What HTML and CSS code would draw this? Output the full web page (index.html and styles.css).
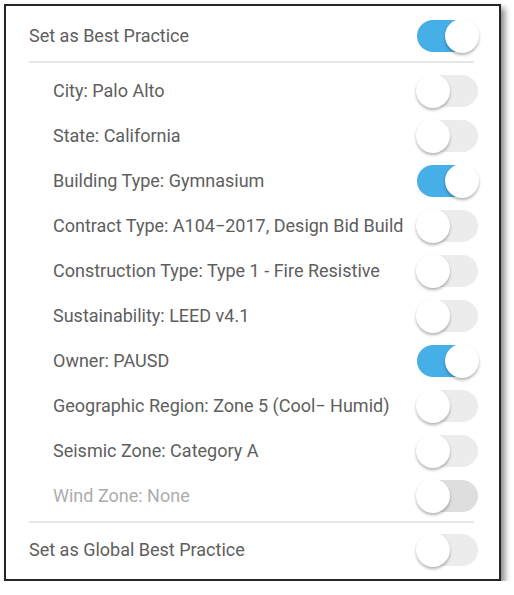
FILE: index.html
```html
<!DOCTYPE html>
<html>
<head>
	<title>Best Practice</title>
	<link rel="stylesheet" href="styles.css">
</head>
<body>
	<div class="panel">
		<div class="row">
			<span class="label">Set as Best Practice</span>
			<span class="toggle on"><span class="knob"></span></span>
		</div>
		<div class="divider top"></div>
		<div class="row sub">
			<span class="label">City: Palo Alto</span>
			<span class="toggle"><span class="knob"></span></span>
		</div>
		<div class="row sub">
			<span class="label">State: California</span>
			<span class="toggle"><span class="knob"></span></span>
		</div>
		<div class="row sub">
			<span class="label">Building Type: Gymnasium</span>
			<span class="toggle on"><span class="knob"></span></span>
		</div>
		<div class="row sub">
			<span class="label">Contract Type: A104&minus;2017, Design Bid Build</span>
			<span class="toggle"><span class="knob"></span></span>
		</div>
		<div class="row sub">
			<span class="label">Construction Type: Type 1 - Fire Resistive</span>
			<span class="toggle"><span class="knob"></span></span>
		</div>
		<div class="row sub">
			<span class="label">Sustainability: LEED v4.1</span>
			<span class="toggle"><span class="knob"></span></span>
		</div>
		<div class="row sub">
			<span class="label">Owner: PAUSD</span>
			<span class="toggle on"><span class="knob"></span></span>
		</div>
		<div class="row sub">
			<span class="label">Geographic Region: Zone 5 (Cool&minus; Humid)</span>
			<span class="toggle"><span class="knob"></span></span>
		</div>
		<div class="row sub">
			<span class="label">Seismic Zone: Category A</span>
			<span class="toggle"><span class="knob"></span></span>
		</div>
		<div class="row sub disabled">
			<span class="label">Wind Zone: None</span>
			<span class="toggle"><span class="knob"></span></span>
		</div>
		<div class="divider bottom"></div>
		<div class="row">
			<span class="label">Set as Global Best Practice</span>
			<span class="toggle"><span class="knob"></span></span>
		</div>
	</div>
</body>
</html>
```

FILE: styles.css
```css
body {
	margin: 0;
	background: #fff;
	font-family: Roboto, "Liberation Sans", sans-serif;
}
.panel {
	box-sizing: border-box;
	width: 497px;
	height: 577px;
	margin: 4px 0 0 4px;
	padding: 7px 21px 7px 23px;
	border: 2px solid #262626;
	box-shadow: 4px 4px 6px rgba(0, 0, 0, 0.45);
	background: #fff;
}
.row {
	height: 45px;
	display: flex;
	align-items: center;
	justify-content: space-between;
}
.sub {
	padding-left: 24px;
}
.label {
	font-size: 18px;
	color: #5e5e5e;
}
.disabled .label {
	color: #adadad;
}
.divider {
	height: 2px;
	background: #e6e6e6;
	margin: 3px 4px 3px 0;
}
.divider.top {
	margin-bottom: 5px;
}
.divider.bottom {
	margin-bottom: 4px;
}
.toggle {
	position: relative;
	width: 61px;
	height: 32px;
	border-radius: 16px;
	background: #ececec;
	flex-shrink: 0;
}
.disabled .toggle {
	background: #dedede;
}
.toggle.on {
	background: #47afe8;
}
.knob {
	position: absolute;
	top: -1px;
	left: -1px;
	width: 34px;
	height: 34px;
	border-radius: 50%;
	background: #fff;
	box-shadow: 0 2px 3px rgba(0, 0, 0, 0.3);
}
.on .knob {
	left: auto;
	right: -1px;
}
```
